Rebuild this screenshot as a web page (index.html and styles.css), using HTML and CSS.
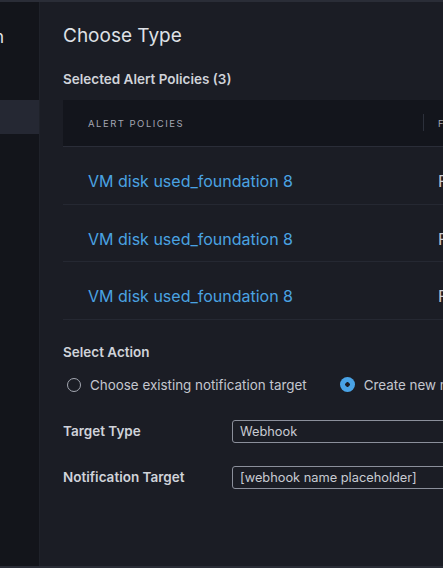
FILE: index.html
```html
<!DOCTYPE html>
<html>
<head>
<meta charset="utf-8">
<link rel="stylesheet" href="styles.css">
</head>
<body>
<div class="frame">
  <aside class="sidebar">
    <div class="side-title"><span>Configuration</span></div>
    <div class="side-item active"></div>
  </aside>
  <main class="main">
    <h1 class="title">Choose Type</h1>
    <h2 class="section">Selected Alert Policies (3)</h2>
    <div class="table">
      <div class="thead">
        <div class="cell c1">ALERT POLICIES</div>
        <div class="cell c2"><span class="divider"></span>FOUNDATION</div>
      </div>
      <div class="row">
        <div class="cell c1 link">VM disk used_foundation 8</div>
        <div class="cell c2 plain">Foundation 8</div>
      </div>
      <div class="row">
        <div class="cell c1 link">VM disk used_foundation 8</div>
        <div class="cell c2 plain">Foundation 8</div>
      </div>
      <div class="row">
        <div class="cell c1 link">VM disk used_foundation 8</div>
        <div class="cell c2 plain">Foundation 8</div>
      </div>
    </div>
    <h2 class="section action">Select Action</h2>
    <div class="radios">
      <label class="radio"><span class="dot"></span>Choose existing notification target</label>
      <label class="radio on"><span class="dot"></span>Create new notification target</label>
    </div>
    <div class="field">
      <div class="label">Target Type</div>
      <div class="input">Webhook</div>
    </div>
    <div class="field">
      <div class="label">Notification Target</div>
      <div class="input">[webhook name placeholder]</div>
    </div>
  </main>
</div>
</body>
</html>
```
FILE: styles.css
```css
html, body {
  margin: 0;
  padding: 0;
  background: #1b1d25;
  overflow: hidden;
}
body {
  font-family: Inter, "Noto Sans", sans-serif;
  color: #d8dae0;
}
.frame {
  display: flex;
  width: 443px;
  height: 568px;
  box-sizing: border-box;
  border-top: 2px solid #2a2d37;
  border-bottom: 2px solid #2a2d37;
  overflow: hidden;
}
.sidebar {
  width: 39px;
  flex: none;
  background: #13151b;
  border-right: 1px solid #1f222a;
  overflow: hidden;
}
.side-title {
  display: flex;
  justify-content: flex-end;
  height: 20px;
  margin-top: 25px;
  font-size: 17px;
  line-height: 20px;
  color: #e4e6ea;
  white-space: nowrap;
  overflow: hidden;
  padding-right: 35px;
}
.side-item {
  height: 34px;
  margin-top: 53px;
}
.side-item.active {
  background: #252833;
}
.main {
  flex: 1;
  min-width: 0;
  padding-left: 23px;
  overflow: hidden;
}
.title {
  margin: 22px 0 0;
  font-size: 19px;
  font-weight: 400;
  line-height: 24px;
  color: #dfe1e6;
}
.section {
  margin: 22px 0 0;
  font-size: 13.5px;
  font-weight: 600;
  line-height: 18px;
  color: #d0d3da;
}
.table {
  width: 600px;
  margin-top: 12px;
}
.thead {
  display: flex;
  align-items: center;
  height: 46px;
  background: #13151c;
  border-bottom: 1px solid #2a2d38;
}
.row {
  display: flex;
  align-items: flex-start;
  height: 56.5px;
  border-bottom: 1px solid #252832;
}
.row .cell {
  padding-top: 24px;
  line-height: 20px;
}
.cell {
  box-sizing: border-box;
  white-space: nowrap;
}
.c1 {
  width: 360px;
  padding-left: 25px;
}
.c2 {
  position: relative;
  padding-left: 15px;
}
.thead .cell {
  font-size: 9.5px;
  letter-spacing: 1.5px;
  color: #a3a7b3;
}
.divider {
  position: absolute;
  left: 0;
  top: -4px;
  width: 1px;
  height: 17px;
  background: #2c303b;
}
.link {
  font-size: 16px;
  color: #4aa3e2;
}
.plain {
  font-size: 16px;
  color: #c8cbd2;
}
.section.action {
  margin-top: 23px;
}
.radios {
  display: flex;
  gap: 33px;
  margin-top: 16px;
  padding-left: 4px;
  white-space: nowrap;
}
.radio {
  display: flex;
  align-items: center;
  gap: 9px;
  font-size: 13.4px;
  color: #c4c7cf;
}
.dot {
  width: 12px;
  height: 12px;
  border: 1.5px solid #a4a8b2;
  border-radius: 50%;
  flex: none;
}
.radio.on .dot {
  width: 15px;
  height: 15px;
  border: none;
  background: radial-gradient(circle, #1b1d25 0 2px, #49a3e6 2.5px);
}
.field {
  display: flex;
  align-items: center;
  margin-top: 23px;
}
.radios + .field {
  margin-top: 27px;
}
.label {
  flex: none;
  width: 169px;
  font-size: 13.5px;
  font-weight: 600;
  color: #d0d3da;
}
.input {
  flex: none;
  width: 300px;
  height: 21px;
  line-height: 21px;
  box-sizing: content-box;
  border: 1px solid #8b8f9b;
  border-radius: 3px;
  padding-left: 7px;
  font-size: 12.8px;
  color: #c8cbd2;
  white-space: nowrap;
}
```
